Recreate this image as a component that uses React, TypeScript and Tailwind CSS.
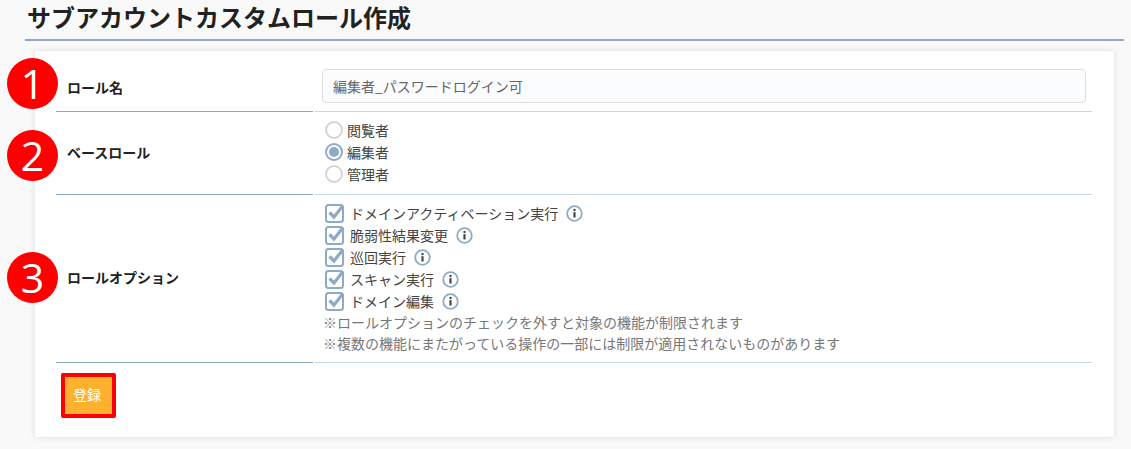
import React from "react";

const font = { fontFamily: '"Noto Sans CJK JP", "Noto Sans", sans-serif' };

function Badge({ n, top }: { n: string; top: string }) {
  return (
    <div
      className={`absolute left-[7px] ${top} flex h-[51px] w-[51px] items-center justify-center rounded-full bg-[#fe0000] text-[41px] font-medium leading-none text-white`}
      style={{ fontFamily: '"Open Sans", sans-serif' }}
    >
      {n}
    </div>
  );
}

function Radio({ checked, label }: { checked?: boolean; label: string }) {
  return (
    <div className="flex h-[22px] items-center">
      <span
        className={`flex h-[18px] w-[18px] items-center justify-center rounded-full border-2 bg-white ${
          checked ? "border-[#8eaac6]" : "border-[#d4d4d4]"
        }`}
      >
        {checked && <span className="h-[10px] w-[10px] rounded-full bg-[#8eaac6]" />}
      </span>
      <span className="ml-[4px] text-[14px] leading-[22px] text-[#444]">{label}</span>
    </div>
  );
}

function Info() {
  return (
    <svg width="17" height="17" viewBox="0 0 17 17" className="ml-[8px] shrink-0">
      <circle cx="8.5" cy="8.5" r="7.3" fill="none" stroke="#8eaac6" strokeWidth="1.8" />
      <circle cx="8.5" cy="5" r="1.2" fill="#444" />
      <rect x="7.4" y="7.2" width="2.2" height="5.3" fill="#444" />
    </svg>
  );
}

function Check({ label }: { label: string }) {
  return (
    <div className="flex h-[22px] items-center">
      <svg width="20" height="20" viewBox="0 0 20 20" className="shrink-0">
        <rect x="1" y="2" width="17" height="17" rx="2.5" fill="#fff" stroke="#8eaac6" strokeWidth="2" />
        <path d="M4.5 9.5 L9 14 L18 2.5" fill="none" stroke="#8eaac6" strokeWidth="3.2" />
      </svg>
      <span className="ml-[5px] text-[14px] leading-[22px] text-[#444]">{label}</span>
      <Info />
    </div>
  );
}

export default function App() {
  return (
    <div className="relative h-[449px] w-[1131px] overflow-hidden bg-[#f9f9f9]" style={font}>
      <div className="ml-[25px] mr-[7px] h-[41px] border-b-2 border-[#8eaac6] pl-[2px] pt-[1px]">
        <h1 className="text-[24px] font-bold leading-[32px] text-[#222]">サブアカウントカスタムロール作成</h1>
      </div>

      <div className="ml-[35px] mr-[17px] mt-[10px] h-[386px] rounded-[2px] bg-white pl-[21px] pr-[22px] pt-[18px] shadow-[0_0_6px_rgba(0,0,0,0.12)]">
        {/* Row 1 */}
        <div className="flex h-[43px]">
          <div className="flex w-[257px] items-center border-b border-[#8eaac6] pb-[6px] pl-[11px] text-[14px] font-bold text-[#222]">
            ロール名
          </div>
          <div className="ml-[2px] flex-1 border-b border-[#c9d6e3] pl-[7px]">
            <div className="flex h-[34px] w-[764px] items-center rounded-[4px] border border-[#dcdcdc] bg-[#fbfcfe] px-[10px] text-[14px] text-[#666]">
              編集者_パスワードログイン可
            </div>
          </div>
        </div>
        {/* Row 2 */}
        <div className="flex h-[83px]">
          <div className="flex w-[257px] items-center border-b border-[#8eaac6] pb-[1px] pl-[11px] text-[14px] font-bold text-[#222]">
            ベースロール
          </div>
          <div className="ml-[2px] flex-1 border-b border-[#c9d6e3] pl-[10px] pt-[7px]">
            <Radio label="閲覧者" />
            <Radio checked label="編集者" />
            <Radio label="管理者" />
          </div>
        </div>
        {/* Row 3 */}
        <div className="flex h-[168px]">
          <div className="flex w-[257px] items-center border-b border-[#8eaac6] pb-[2px] pl-[11px] text-[14px] font-bold text-[#222]">
            ロールオプション
          </div>
          <div className="ml-[2px] flex-1 border-b border-[#c9d6e3] pl-[8px] pt-[7px]">
            <div className="pl-[2px]">
              <Check label="ドメインアクティベーション実行" />
              <Check label="脆弱性結果変更" />
              <Check label="巡回実行" />
              <Check label="スキャン実行" />
              <Check label="ドメイン編集" />
            </div>
            <p className="text-[14px] leading-[21px] text-[#777]">※ロールオプションのチェックを外すと対象の機能が制限されます</p>
            <p className="text-[14px] leading-[21px] text-[#777]">※複数の機能にまたがっている操作の一部には制限が適用されないものがあります</p>
          </div>
        </div>
        <button className="ml-[5px] mt-[10px] flex h-[45px] w-[55px] items-center justify-start rounded-[2px] border-[4px] border-[#fe0000] bg-[#ffb02e] pb-[2px] pl-[8px] text-[14px] text-white">
          登録
        </button>
      </div>

      <Badge n="1" top="top-[58px]" />
      <Badge n="2" top="top-[130px]" />
      <Badge n="3" top="top-[252px]" />
    </div>
  );
}
